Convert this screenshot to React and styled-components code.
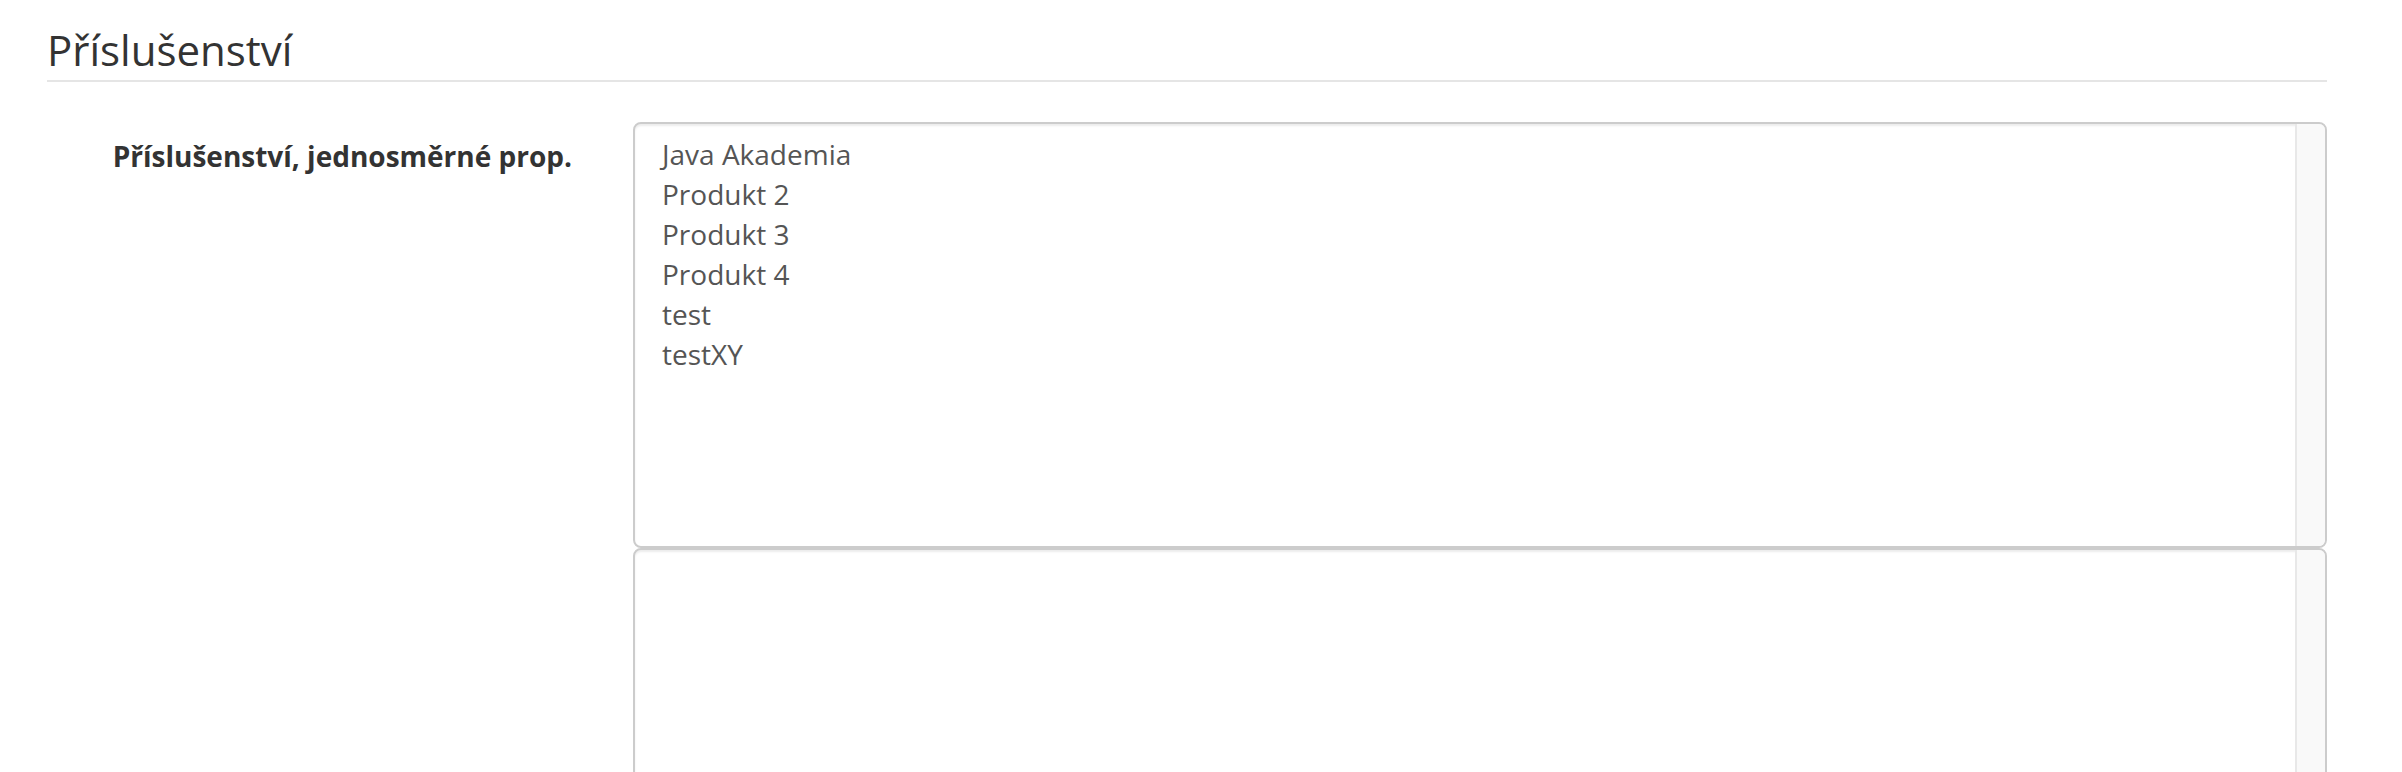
import React from 'react';
import styled, { createGlobalStyle } from 'styled-components';

const GlobalStyle = createGlobalStyle`
  html, body {
    margin: 0;
    padding: 0;
    background: #fff;
    overflow: hidden;
  }
  body {
    font-family: "Open Sans", "Liberation Sans", Arial, sans-serif;
    color: #333;
  }
`

const Page = styled.div`
  padding: 20px 75px 0 47px;
  height: 772px;
  box-sizing: border-box;
`

const Legend = styled.div`
  font-size: 42px;
  line-height: 60px;
  color: #333;
  border-bottom: 2px solid #e5e5e5;
  margin-bottom: 40px;
`

const FormRow = styled.div`
  display: grid;
  grid-template-columns: 525px 1fr;
  column-gap: 61px;
  align-items: start;
`

const Label = styled.label`
  text-align: right;
  font-weight: 700;
  font-size: 28px;
  line-height: 40px;
  padding-top: 14px;
  color: #333;
`

const Boxes = styled.div`
  display: flex;
  flex-direction: column;
`

const ListBox = styled.div`
  height: ${p => p.$h}px;
  box-sizing: border-box;
  border: 2px solid #ccc;
  border-radius: 8px;
  box-shadow: inset 0 2px 2px rgba(0, 0, 0, 0.075);
  background: #fff;
  display: flex;
  overflow: hidden;
`

const Options = styled.ul`
  flex: 1;
  list-style: none;
  margin: 0;
  padding: 10px 27px;
  font-size: 28px;
  line-height: 40px;
  color: #555;
`

const Track = styled.div`
  width: 28px;
  background: #f9f9f9;
  border-left: 2px solid #e8e8e8;
`

const items = ['Java Akademia', 'Produkt 2', 'Produkt 3', 'Produkt 4', 'test', 'testXY']

const App = () => (
  <Page>
    <GlobalStyle />
    <Legend>Příslušenství</Legend>
    <FormRow>
      <Label>Příslušenství, jednosměrné prop.</Label>
      <Boxes>
        <ListBox $h={426}>
          <Options>
            {items.map(e => <li key={e}>{e}</li>)}
          </Options>
          <Track />
        </ListBox>
        <ListBox $h={426}>
          <Options />
          <Track />
        </ListBox>
      </Boxes>
    </FormRow>
  </Page>
)

export default App;
